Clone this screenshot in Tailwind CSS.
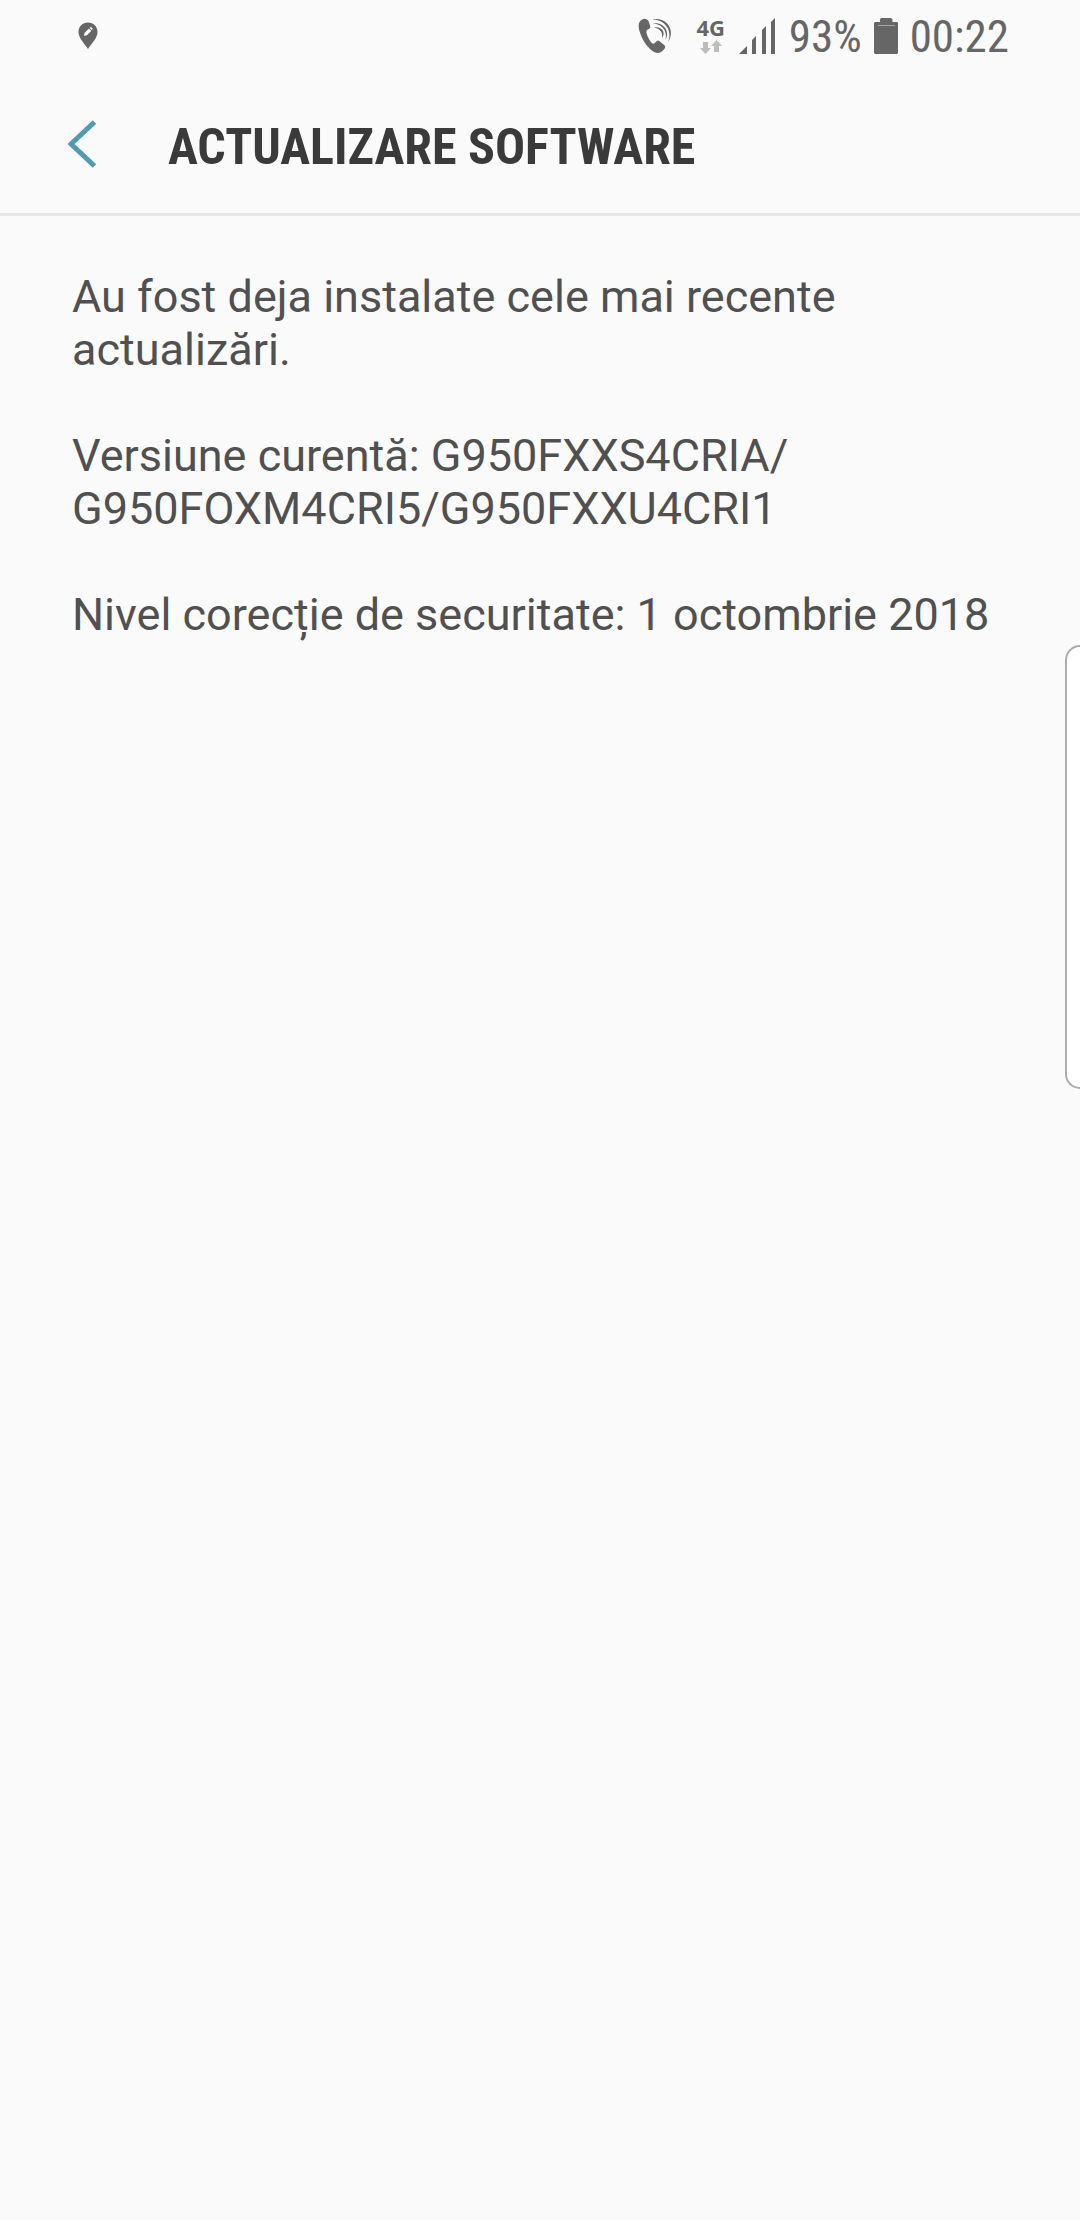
<!DOCTYPE html>
<html lang="ro">
<head>
    <meta charset="UTF-8">
    <meta name="viewport" content="width=device-width, initial-scale=1">
    <title>Actualizare software</title>
    <script src="https://cdn.jsdelivr.net/npm/@tailwindcss/browser@4"></script>
</head>
<body class="min-h-screen bg-[#fafafa] font-['Roboto',sans-serif] text-[#505050]">
    <!-- Status bar -->
    <div class="flex h-18 items-center justify-between pl-[78px] pr-[71px] text-[#666666]">
        <svg class="h-7 w-5" viewBox="0 0 20 28" fill="currentColor">
            <path d="M10 0.5C4.500 0.500 0.500 4.500 0.500 10c0 6 5.500 11 9.500 17c4-6 9.500-11 9.500-17C19.500 4.500 15.500 0.500 10 0.500z"/>
            <path d="M6 14l.6-3.200 4.400-4.200 2.300 2.300-4.400 4.300zM11.600 6l.8-.7q.6-.4 1.200.1l.8.8q.5.600 0 1.200l-.6.700z" fill="#fafafa"/>
        </svg>
        <div class="flex items-center">
            <svg class="h-9 w-9" viewBox="0 0 36 36" fill="currentColor">
                <path d="M9.200 1.300q-2-1.200-4 .3C1.500 3.500 1 7.500 2.500 13c2 7.500 7 15.500 13 20c3.500 2.600 7.500 2.800 10.500-.5l2-2.500q.8-1.500-.6-2.800l-4.800-4q-1.600-1.200-3 .1l-2.200 2q-1.400 1-2.600-.3C12 21.800 10 17.800 9.300 14q-.2-1.800 1.400-2.500l1.500-.8q1.500-.8 1-2.500l-1.800-5.400q-.6-1-2.200-1.500z"/>
                <!-- sound waves, thick in the middle and thin at the ends -->
                <path d="M15.500 1.500C28-1.500 39.500 11 31 24C36 12 27.500 1.500 15.500 1.500z"/>
                <path d="M16 5.500C26 3.500 33.500 13 28.500 22C30.500 12.500 25 6 16 5.500z"/>
                <path d="M17 9.500C24.500 8 29.500 14.500 25 20C26 14 23 10.500 17 9.500z"/>
            </svg>
            <div class="ml-5.5 flex w-8 flex-col items-center gap-1">
                <span class="font-['Open_Sans',sans-serif] text-[22px] leading-[18px] font-bold">4G</span>
                <svg class="h-3.5 w-[22px]" viewBox="0 0 22 14" fill="#bcbcbc">
                    <path d="M3 2h5v6h3l-5.500 6L0 8h3zM14 12h5V6h3l-5.500-6L11 6h3z"/>
                </svg>
            </div>
            <svg class="ml-3 h-9 w-9" viewBox="0 0 36 36" fill="currentColor">
                <path d="M0 36l8-8v8zM13 36V22l4-4v18zM23 36V12l4-4v28zM32 36V4l4-4v36z"/>
            </svg>
            <span class="ml-3.5 pt-0.5 font-['Roboto_Condensed',sans-serif] text-[45px] leading-[54px]">93%</span>
            <svg class="ml-3 h-9 w-6" viewBox="0 0 24 36" fill="currentColor">
                <path d="M7 0h10l1.500 1.500V4H23l1 1v30l-1 1H1l-1-1V5l1-1h5V1.500z"/>
                <path d="M4 7h17v1H4z" fill="#a6a6a6"/>
            </svg>
            <span class="ml-3 pt-0.5 font-['Roboto_Condensed',sans-serif] text-[45px] leading-[54px]">00:22</span>
        </div>
    </div>

    <!-- Title bar -->
    <header class="flex h-36 items-center border-b-3 border-[#e6e6e6] pt-0.5 pl-[68px]">
        <button type="button" aria-label="Înapoi" class="text-[#4f9bb5]">
            <svg class="h-12 w-7" viewBox="0 0 28 48" fill="none" stroke="currentColor" stroke-width="5">
                <path d="M26.500 2L3 24l23.500 22"/>
            </svg>
        </button>
        <h1 class="ml-18 pt-1.5 font-['Roboto_Condensed',sans-serif] text-[50px] leading-[60px] font-bold text-[#3a3a3a]">ACTUALIZARE SOFTWARE</h1>
    </header>

    <main class="space-y-[53px] px-18 pt-[54px] text-[45px] leading-[53px]">
        <p>Au fost deja instalate cele mai recente actualizări.</p>
        <p>Versiune curentă: G950FXXS4CRIA/<wbr>G950FOXM4CRI5/G950FXXU4CRI1</p>
        <p>Nivel corecție de securitate: 1 octombrie 2018</p>
    </main>

    <!-- Edge panel handle -->
    <div class="fixed top-[645px] right-0 h-[444px] w-[15px] rounded-l-[18px] border-2 border-r-0 border-[#acacac] bg-white"></div>
</body>
</html>
